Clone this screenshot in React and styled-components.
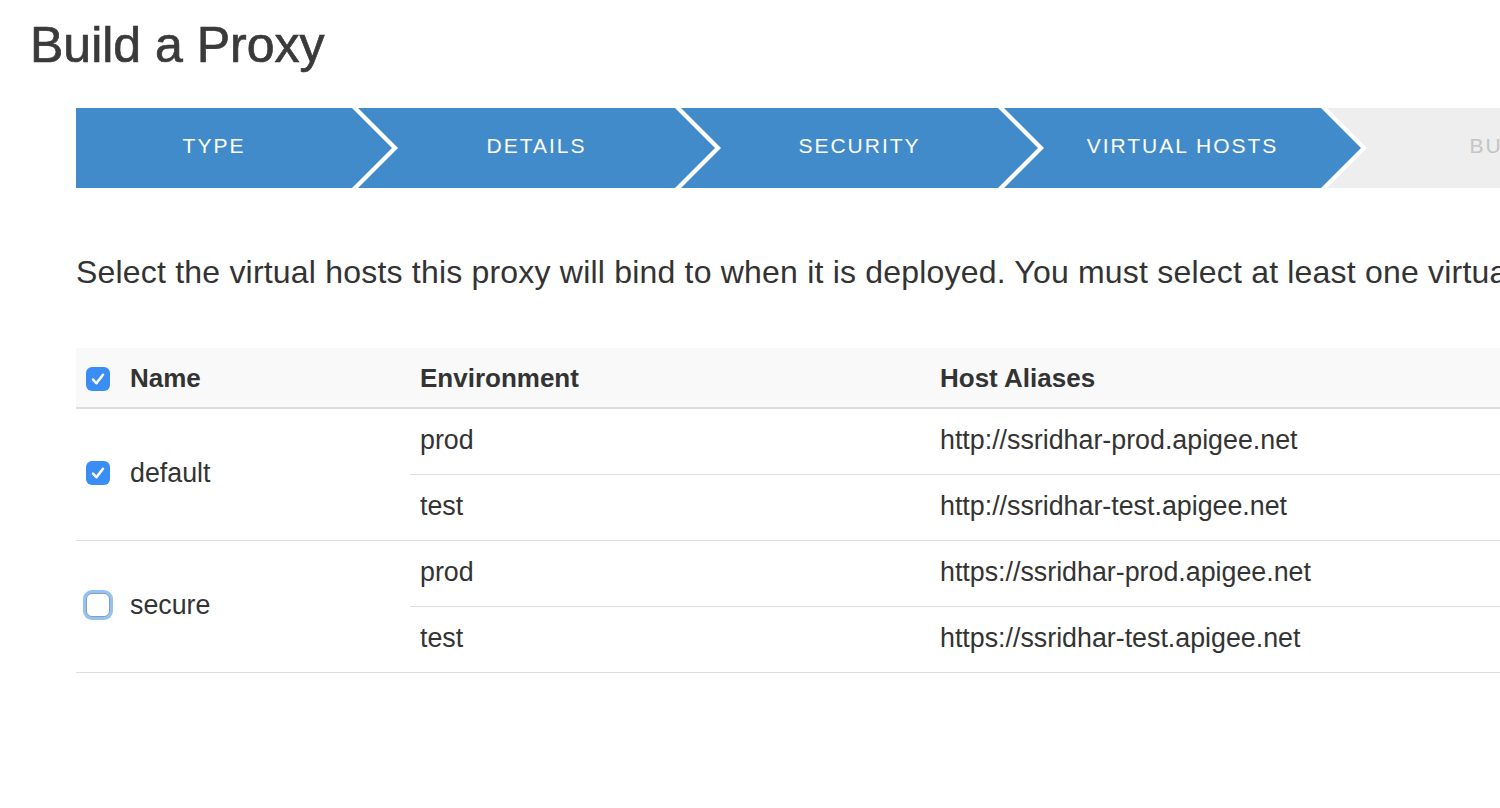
import React from "react";
import styled, { createGlobalStyle } from "styled-components";

const GlobalStyle = createGlobalStyle`
  html, body {
    margin: 0;
    padding: 0;
    background: #fff;
    overflow: hidden;
  }
  body {
    font-family: "Liberation Sans", Arial, sans-serif;
    color: #333;
  }
`;

const Page = styled.div`
  width: 1500px;
  height: 808px;
  overflow: hidden;
  padding-left: 30px;
  box-sizing: border-box;
`;

const Title = styled.h1`
  margin: 16px 0 0;
  font-size: 50px;
  line-height: 58px;
  font-weight: normal;
  color: #3a3a3a;
  -webkit-text-stroke: 0.7px #3a3a3a;
`;

const Content = styled.div`
  padding-left: 46px;
`;

const Steps = styled.div`
  display: flex;
  height: 80px;
  margin-top: 34px;
  overflow: hidden;
`;

const Step = styled.div`
  flex: 0 0 auto;
  width: ${(p) => (p.$first ? 316 : 357)}px;
  margin-left: ${(p) => (p.$first ? 0 : -34)}px;
  padding-left: ${(p) => (p.$first ? 0 : 40)}px;
  padding-right: 40px;
  box-sizing: border-box;
  background: ${(p) => (p.$done ? "#428bca" : "#eeeeee")};
  color: ${(p) => (p.$done ? "#fff" : "#c4c4c4")};
  clip-path: ${(p) =>
    p.$first
      ? "polygon(0 0, calc(100% - 40px) 0, 100% 50%, calc(100% - 40px) 100%, 0 100%)"
      : "polygon(0 0, calc(100% - 40px) 0, 100% 50%, calc(100% - 40px) 100%, 0 100%, 40px 50%)"};
  text-align: center;
  line-height: 76px;
  font-size: 21px;
  letter-spacing: 2px;
  text-transform: uppercase;
  white-space: nowrap;
`;

const Intro = styled.p`
  margin: 64px 0 0;
  font-size: 32px;
  line-height: 40px;
  letter-spacing: 0.2px;
  white-space: nowrap;
`;

const Table = styled.table`
  margin-top: 56px;
  width: 1424px;
  border-collapse: collapse;
  font-size: 26.8px;
`;

const HeadCell = styled.th`
  height: 60px;
  padding: 2px 10px 0;
  background: #f9f9f9;
  border-bottom: 2px solid #dddddd;
  text-align: left;
  font-weight: bold;
  font-size: 26px;
  vertical-align: middle;
  width: ${(p) => p.$w || "auto"};
  box-sizing: border-box;
`;

const Cell = styled.td`
  height: 66px;
  padding: 0 10px 2px;
  border-top: 1px solid #dddddd;
  vertical-align: middle;
  box-sizing: border-box;
`;

const Bottom = styled.tr`
  border-bottom: 1px solid #dddddd;
`;

const NameWrap = styled.div`
  display: flex;
  align-items: center;
  gap: 20px;
`;

const Box = styled.span`
  flex: 0 0 auto;
  width: 24px;
  height: 24px;
  border-radius: 6px;
  box-sizing: border-box;
  display: flex;
  align-items: center;
  justify-content: center;
  background: ${(p) => (p.$checked ? "#3a8df5" : "#fff")};
  border: ${(p) => (p.$checked ? "none" : "1px solid #8c9cb0")};
  box-shadow: ${(p) => (p.$focus ? "0 0 0 3px #92c2f6" : "none")};
`;

const Check = () => (
  <svg width="20" height="20" viewBox="0 0 20 20">
    <path
      d="M5 10.6 L8.4 14.2 L15 5.8"
      fill="none"
      stroke="#fff"
      strokeWidth="2.6"
      strokeLinecap="round"
      strokeLinejoin="round"
    />
  </svg>
);

const Checkbox = ({ checked, focus }) => (
  <Box $checked={checked} $focus={focus}>
    {checked && <Check />}
  </Box>
);

const steps = ["Type", "Details", "Security", "Virtual Hosts", "Build"];

const hosts = [
  {
    name: "default",
    checked: true,
    envs: [
      ["prod", "http://ssridhar-prod.apigee.net"],
      ["test", "http://ssridhar-test.apigee.net"],
    ],
  },
  {
    name: "secure",
    checked: false,
    focus: true,
    envs: [
      ["prod", "https://ssridhar-prod.apigee.net"],
      ["test", "https://ssridhar-test.apigee.net"],
    ],
  },
];

export default function App() {
  return (
    <Page>
      <GlobalStyle />
      <Title>Build a Proxy</Title>
      <Content>
        <Steps>
          {steps.map((s, i) => (
            <Step key={s} $first={i === 0} $done={i < 4}>
              {s}
            </Step>
          ))}
        </Steps>
        <Intro>
          Select the virtual hosts this proxy will bind to when it is deployed. You must select at least one virtual host.
        </Intro>
        <Table>
          <thead>
            <tr>
              <HeadCell $w="334px">
                <NameWrap>
                  <Checkbox checked />
                  Name
                </NameWrap>
              </HeadCell>
              <HeadCell $w="520px">Environment</HeadCell>
              <HeadCell>Host Aliases</HeadCell>
            </tr>
          </thead>
          <tbody>
            {hosts.map((h) =>
              h.envs.map(([env, url], j) => {
                const Row = j === h.envs.length - 1 && h.name === "secure" ? Bottom : "tr";
                return (
                  <Row key={h.name + env}>
                    {j === 0 && (
                      <Cell rowSpan={h.envs.length}>
                        <NameWrap>
                          <Checkbox checked={h.checked} focus={h.focus} />
                          {h.name}
                        </NameWrap>
                      </Cell>
                    )}
                    <Cell>{env}</Cell>
                    <Cell>{url}</Cell>
                  </Row>
                );
              })
            )}
          </tbody>
        </Table>
      </Content>
    </Page>
  );
}
